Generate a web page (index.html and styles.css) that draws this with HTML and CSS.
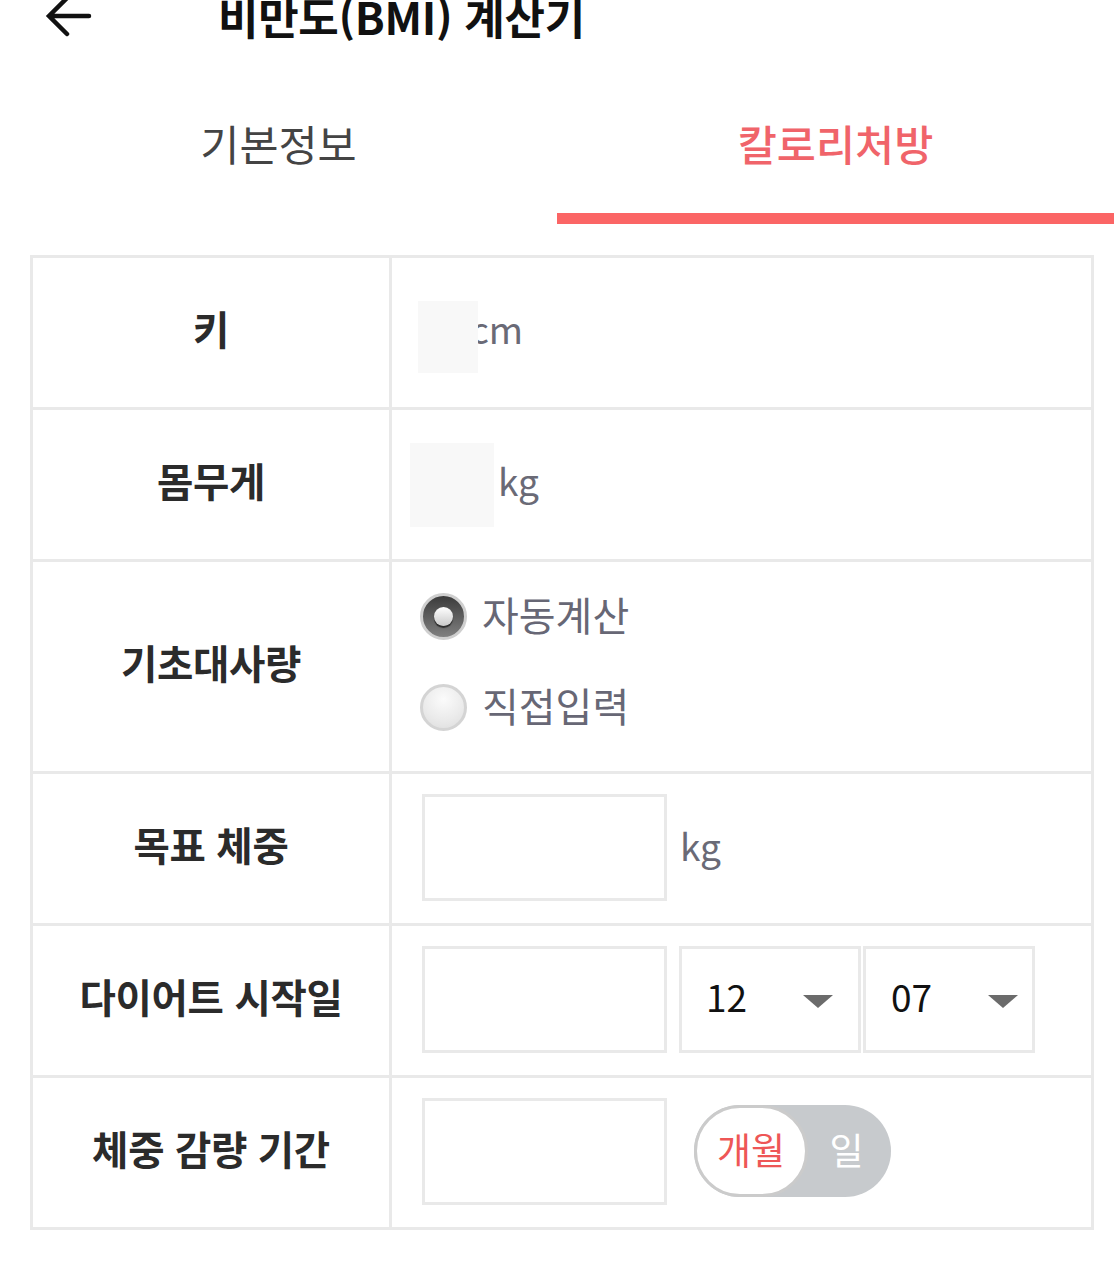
FILE: index.html
```html
<!DOCTYPE html>
<html lang="ko">
<head>
<meta charset="utf-8">
<title>비만도(BMI) 계산기</title>
<link rel="stylesheet" href="styles.css">
</head>
<body>
<header class="topbar">
  <span class="back" aria-label="뒤로">
    <svg width="50" height="44" viewBox="0 0 50 44"><path d="M47 22 H8 M25 4 L7 22 L25 40" fill="none" stroke="#111" stroke-width="4.5" stroke-linecap="round" stroke-linejoin="miter"/></svg>
  </span>
  <h1 class="title">비만도(BMI) 계산기</h1>
</header>

<nav class="tabs">
  <div class="tab">기본정보</div>
  <div class="tab active">칼로리처방</div>
</nav>

<section class="form">
  <div class="row">
    <div class="label">키</div>
    <div class="value v-height">
      <span class="ghost ghost-h"></span><span class="unit unit-under">cm</span>
    </div>
  </div>
  <div class="row">
    <div class="label">몸무게</div>
    <div class="value v-weight">
      <span class="ghost ghost-w"></span><span class="unit unit-w">kg</span>
    </div>
  </div>
  <div class="row row-tall">
    <div class="label">기초대사량</div>
    <div class="value v-radio">
      <label class="opt"><span class="radio checked"><span class="dot"></span></span><span class="opt-text">자동계산</span></label>
      <label class="opt"><span class="radio"></span><span class="opt-text">직접입력</span></label>
    </div>
  </div>
  <div class="row">
    <div class="label">목표 체중</div>
    <div class="value v-box">
      <span class="field"></span><span class="unit unit-goal">kg</span>
    </div>
  </div>
  <div class="row">
    <div class="label">다이어트 시작일</div>
    <div class="value v-box">
      <span class="field"></span>
      <span class="select sel-month"><span class="num">12</span><span class="caret"></span></span>
      <span class="select sel-day"><span class="num">07</span><span class="caret"></span></span>
    </div>
  </div>
  <div class="row">
    <div class="label">체중 감량 기간</div>
    <div class="value v-box">
      <span class="field"></span>
      <span class="toggle"><span class="knob">개월</span><span class="off">일</span></span>
    </div>
  </div>
</section>
</body>
</html>
```

FILE: styles.css
```css
* { box-sizing: border-box; }
html, body { margin: 0; padding: 0; background: #fff; }
body {
  font-family: "Noto Sans CJK KR", "Noto Sans", sans-serif;
  color: #222;
  width: 1116px;
  overflow: hidden;
}

/* header */
.topbar {
  display: flex;
  align-items: center;
  height: 60px;
  margin-top: -14px;
}
.back { display: block; width: 50px; height: 44px; margin-left: 42px; }
.back svg { display: block; }
.title {
  margin: 0 0 0 126px;
  font-size: 44px;
  line-height: 1;
  font-weight: 700;
  color: #111;
  letter-spacing: -0.3px;
}

/* tabs */
.tabs {
  display: grid;
  grid-template-columns: 557px 557px;
}
.tab {
  text-align: center;
  font-size: 42.5px;
  line-height: 40px;
  padding-top: 77px;
  padding-bottom: 50px;
  border-bottom: 11px solid transparent;
  color: #444;
}
.tab.active {
  color: #f0646a;
  font-weight: 500;
  border-bottom-color: #fb6565;
}

/* form table */
.form {
  margin: 31px 22px 0 30px;
  border: 3px solid #e9e9e9;
}
.row {
  display: grid;
  grid-template-columns: 359px 1fr;
  height: 152px;
  border-top: 3px solid #e9e9e9;
}
.row:first-child { border-top: 0; height: 149px; }
.row.row-tall { height: 212px; }
.label {
  display: flex;
  align-items: center;
  justify-content: center;
  border-right: 3px solid #e9e9e9;
  padding-bottom: 10px;
  font-size: 39.5px;
  font-weight: 700;
  color: #2b2b2b;
  letter-spacing: -0.3px;
}
.value {
  display: flex;
  align-items: center;
}
.unit {
  font-size: 37px;
  color: #6a6a76;
}

.v-height { padding-left: 26px; }
.ghost { display: block; background: #f8f8f8; }
.ghost-h { width: 60px; height: 72px; position: relative; z-index: 1; margin-top: 8px; }
.unit-under { margin-left: -8px; margin-top: -10px; }

.v-weight { padding-left: 18px; }
.ghost-w { width: 84px; height: 84px; }
.unit-w { margin-left: 4px; margin-top: -10px; }

.v-radio {
  flex-direction: column;
  align-items: flex-start;
  justify-content: center;
  padding-left: 28px;
  padding-bottom: 10px;
  gap: 41px;
}
.opt { display: flex; align-items: center; height: 50px; }
.radio {
  width: 47px;
  height: 47px;
  border-radius: 50%;
  border: 3px solid #d4d4d4;
  background: radial-gradient(circle at 50% 30%, #fbfbfb 0%, #eaeaea 60%, #dcdcdc 100%);
  display: flex;
  align-items: center;
  justify-content: center;
}
.radio.checked {
  border-color: #cfcfcf;
  background: linear-gradient(#3b3b3b, #808080);
}
.dot {
  width: 19px;
  height: 19px;
  border-radius: 50%;
  background: linear-gradient(#ffffff, #c9c9c9);
  box-shadow: 0 2px 1px rgba(0,0,0,0.6);
}
.opt-text {
  margin-left: 15px;
  font-size: 40px;
  color: #676775;
  margin-top: -4px;
}

.v-box { padding-left: 30px; }
.field {
  display: block;
  width: 245px;
  height: 107px;
  border: 3px solid #e9e9e9;
  background: #fff;
  margin-top: -3px;
}
.unit-goal { margin-left: 13px; margin-top: -8px; }

.select {
  display: flex;
  align-items: center;
  height: 107px;
  margin-top: -3px;
  border: 3px solid #e9e9e9;
  padding-left: 24px;
}
.sel-month { width: 182px; margin-left: 12px; }
.sel-day { width: 172px; margin-left: 2px; padding-left: 25px; }
.num {
  display: block;
  width: 97px;
  font-size: 37px;
  color: #111;
  margin-top: -6px;
}
.caret {
  display: block;
  width: 0;
  height: 0;
  border-left: 15px solid transparent;
  border-right: 15px solid transparent;
  border-top: 13px solid #6b6b6b;
  margin-top: 4px;
}

.toggle {
  display: flex;
  align-items: center;
  width: 197px;
  height: 92px;
  margin-left: 27px;
  margin-top: -4px;
  border-radius: 46px;
  background: #c7cacd;
}
.knob {
  display: flex;
  align-items: center;
  justify-content: center;
  width: 114px;
  height: 92px;
  border-radius: 46px;
  border: 3px solid #cbcbcb;
  background: #fff;
  color: #ee5656;
  font-size: 37px;
  padding-bottom: 4px;
}
.off {
  flex: 1;
  text-align: center;
  color: #fff;
  font-size: 37px;
  padding-right: 6px;
  padding-bottom: 4px;
}
```
